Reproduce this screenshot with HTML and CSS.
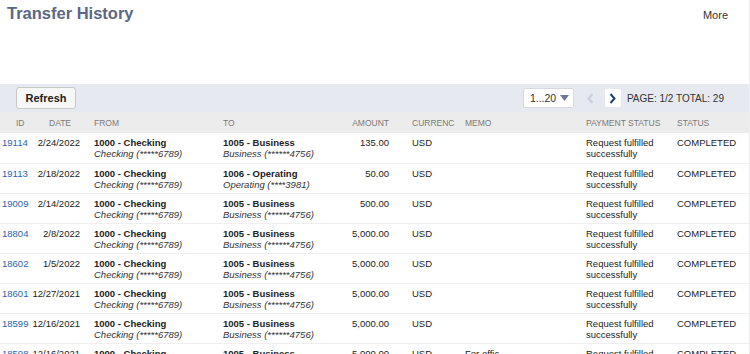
FILE: index.html
```html
<!DOCTYPE html>
<html lang="en">
<head>
    <meta charset="UTF-8">
    <title>Transfer History</title>
    <link rel="stylesheet" href="styles.css">
</head>
<body>
    <div class="page">
        <!-- Title bar -->
        <div class="title-bar">
            <h1>Transfer History</h1>
            <span class="more">More</span>
        </div>

        <!-- Toolbar: refresh + pager -->
        <div class="toolbar">
            <button class="refresh-btn">Refresh</button>
            <div class="pager">
                <div class="range-select">
                    <span>1...20</span>
                    <svg width="9" height="6" viewBox="0 0 9 6"><path d="M0 0h9L4.5 6z" fill="#6b7a90"/></svg>
                </div>
                <span class="pager-btn disabled">
                    <svg width="7" height="11" viewBox="0 0 7 11"><path d="M5.5 1L1.5 5.5 5.5 10" fill="none" stroke="#c9d0db" stroke-width="2"/></svg>
                </span>
                <span class="pager-btn">
                    <svg width="7" height="11" viewBox="0 0 7 11"><path d="M1.5 1l4 4.5-4 4.5" fill="none" stroke="#1f3f73" stroke-width="2"/></svg>
                </span>
                <span class="page-info">PAGE: 1/2 TOTAL: 29</span>
            </div>
        </div>

        <!-- Transfer list -->
        <table class="transfers">
            <colgroup>
                <col class="c-id"><col class="c-date"><col class="c-from"><col class="c-to">
                <col class="c-amount"><col class="c-cur"><col class="c-memo"><col class="c-pay"><col class="c-status">
            </colgroup>
            <thead>
                <tr>
                    <th class="id">ID</th>
                    <th class="date">DATE</th>
                    <th>FROM</th>
                    <th>TO</th>
                    <th class="amount">AMOUNT</th>
                    <th>CURRENC</th>
                    <th>MEMO</th>
                    <th>PAYMENT STATUS</th>
                    <th>STATUS</th>
                </tr>
            </thead>
            <tbody id="rows"></tbody>
        </table>
    </div>

    <script>
        const transfers = [
            { id: '19114', date: '2/24/2022', to: '1005 - Business', toSub: 'Business (******4756)', amount: '135.00', memo: '' },
            { id: '19113', date: '2/18/2022', to: '1006 - Operating', toSub: 'Operating (****3981)', amount: '50.00', memo: '' },
            { id: '19009', date: '2/14/2022', to: '1005 - Business', toSub: 'Business (******4756)', amount: '500.00', memo: '' },
            { id: '18804', date: '2/8/2022', to: '1005 - Business', toSub: 'Business (******4756)', amount: '5,000.00', memo: '' },
            { id: '18602', date: '1/5/2022', to: '1005 - Business', toSub: 'Business (******4756)', amount: '5,000.00', memo: '' },
            { id: '18601', date: '12/27/2021', to: '1005 - Business', toSub: 'Business (******4756)', amount: '5,000.00', memo: '' },
            { id: '18599', date: '12/16/2021', to: '1005 - Business', toSub: 'Business (******4756)', amount: '5,000.00', memo: '' },
            { id: '18598', date: '12/16/2021', to: '1005 - Business', toSub: 'Business (******4756)', amount: '5,000.00', memo: 'For offic' }
        ];

        const rows = document.getElementById('rows');
        transfers.forEach(t => {
            const tr = document.createElement('tr');
            tr.innerHTML = `
                <td class="id"><a href="#">${t.id}</a></td>
                <td class="date">${t.date}</td>
                <td><b>1000 - Checking</b><i>Checking (*****6789)</i></td>
                <td><b>${t.to}</b><i>${t.toSub}</i></td>
                <td class="amount">${t.amount}</td>
                <td>USD</td>
                <td>${t.memo}</td>
                <td>Request fulfilled<br>successfully</td>
                <td>COMPLETED</td>
            `;
            rows.appendChild(tr);
        });
    </script>
</body>
</html>
```

FILE: styles.css
```css
body {
    margin: 0;
    font-family: "Liberation Sans", Arial, sans-serif;
    color: #222;
    background-color: #fff;
}
.page {
    border-right: 1px solid #eceef1;
    height: 354px;
    overflow: hidden;
}
.title-bar {
    display: flex;
    justify-content: space-between;
    align-items: flex-start;
    height: 84px;
    padding: 0 21px 0 7px;
}
.title-bar h1 {
    margin: 4px 0 0;
    font-size: 16.5px;
    font-weight: bold;
    color: #5b6783;
}
.more {
    margin-top: 9px;
    font-size: 11px;
    color: #333;
}
.toolbar {
    display: flex;
    justify-content: space-between;
    align-items: center;
    height: 28px;
    padding: 0 25px 0 16px;
    background-color: #e6e9f0;
}
.refresh-btn {
    height: 22px;
    width: 60px;
    padding: 0;
    font-family: inherit;
    font-size: 11px;
    font-weight: bold;
    color: #222;
    background-color: #f7f7f7;
    border: 1px solid #c8c8c8;
    border-radius: 3px;
}
.pager {
    display: flex;
    align-items: center;
}
.range-select {
    display: flex;
    justify-content: space-between;
    align-items: center;
    box-sizing: border-box;
    width: 51px;
    height: 20px;
    padding: 0 4px 0 6px;
    margin-right: 9px;
    font-size: 10.5px;
    color: #333;
    background-color: #fff;
    border: 1px solid #d5d9e0;
    border-radius: 2px;
}
.pager-btn {
    display: flex;
    align-items: center;
    justify-content: center;
    width: 16px;
    height: 18px;
    margin-right: 6px;
    background-color: #fff;
    border-radius: 2px;
}
.pager-btn.disabled {
    background-color: transparent;
}
.page-info {
    font-size: 10px;
    color: #333;
}
.transfers {
    width: 100%;
    table-layout: fixed;
    border-collapse: collapse;
    font-size: 9.5px;
}
.c-id { width: 32px; }
.c-date { width: 56px; }
.c-from { width: 129px; }
.c-to { width: 113px; }
.c-amount { width: 76px; }
.c-cur { width: 53px; }
.c-memo { width: 121px; }
.c-pay { width: 91px; }
.transfers th {
    height: 21px;
    padding: 0 6px;
    text-align: left;
    font-size: 8.5px;
    font-weight: normal;
    color: #7a7a7a;
    background-color: #ececec;
    white-space: nowrap;
    overflow: hidden;
}
.transfers th.id {
    padding-left: 16px;
    padding-right: 0;
}
.transfers td {
    height: 30px;
    box-sizing: border-box;
    padding: 4px 6px 3px;
    vertical-align: top;
    line-height: 11px;
    color: #222;
    border-bottom: 1px solid #efefef;
    white-space: nowrap;
    overflow: hidden;
}
.transfers td b,
.transfers td i {
    display: block;
}
.transfers td i {
    color: #333;
}
.transfers td.id {
    padding-left: 2px;
    padding-right: 0;
}
.transfers td.id a {
    color: #2a64b0;
    text-decoration: none;
}
.transfers td.date {
    text-align: right;
    padding-left: 0;
    padding-right: 8px;
}
.transfers th.date {
    padding-left: 17px;
}
.transfers .amount {
    text-align: right;
    padding-right: 17px;
}
```
